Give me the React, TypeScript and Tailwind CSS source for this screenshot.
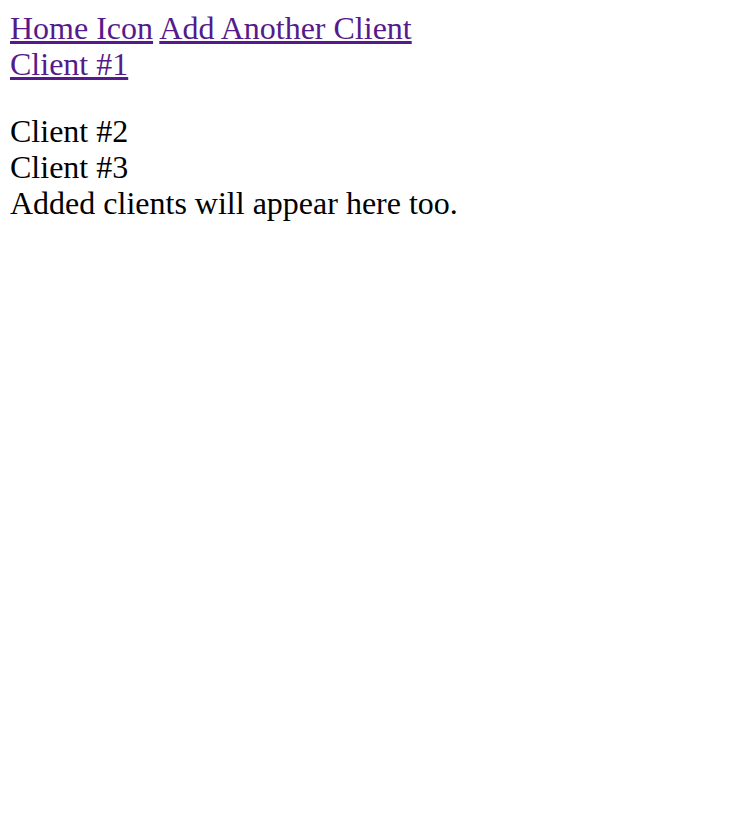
export default function App() {
    return (
        <div className="min-h-screen bg-white p-[10px] text-[32px] leading-[36px] text-black" style={{ fontFamily: '"Liberation Serif", serif' }}>
            <div>
                <a href="#" className="text-[#551a8b] underline">Home Icon</a>{" "}
                <a href="#" className="text-[#551a8b] underline">Add Another Client</a>
            </div>
            <div>
                <a href="#" className="text-[#551a8b] underline">Client #1</a>
            </div>
            <div className="mt-[31px]">Client #2</div>
            <div>Client #3</div>
            <div>Added clients will appear here too.</div>
        </div>
    );
}
